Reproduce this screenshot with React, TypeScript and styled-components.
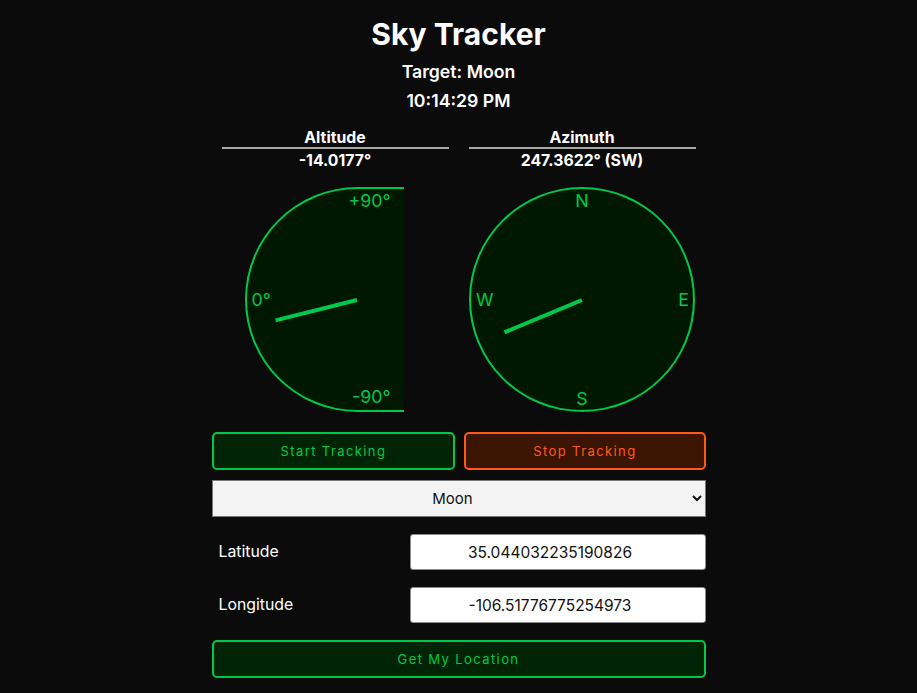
import React from "react";
import styled, { createGlobalStyle } from "styled-components";

const GREEN = "#00c84a";
const ORANGE = "#ff5a14";

const Global = createGlobalStyle`
  html, body { margin: 0; padding: 0; background: #0b0b0b; }
  body { font-family: Inter, "Noto Sans", sans-serif; color: #fff; }
  * { box-sizing: border-box; }
`;

const Page = styled.main`
  width: 494px;
  margin: 0 auto;
  display: flex;
  flex-direction: column;
  align-items: stretch;
`;

const Title = styled.h1`
  margin: 15px 0 0;
  font-size: 30px;
  line-height: 38px;
  font-weight: 700;
  text-align: center;
`;

const Sub = styled.div`
  font-size: 17.7px;
  line-height: 29px;
  font-weight: 600;
  text-align: center;
`;

const SubGroup = styled.div`
  margin-top: 4px;
`;

const Columns = styled.section`
  display: flex;
  gap: 20px;
  padding: 0 10px;
  margin-top: 13px;
`;

const Column = styled.div`
  flex: 1;
  display: flex;
  flex-direction: column;
  align-items: stretch;
`;

const ColHead = styled.div`
  font-size: 15.8px;
  line-height: 19px;
  font-weight: 700;
  text-align: center;
  border-bottom: 2px solid #a8a8a8;
`;

const ColValue = styled.div`
  margin-top: 2px;
  font-size: 15.8px;
  line-height: 20px;
  font-weight: 700;
  text-align: center;
`;

const DialRow = styled.div<{ $align: "start" | "center" }>`
  margin-top: 16px;
  display: flex;
  justify-content: ${(p) => (p.$align === "start" ? "flex-start" : "center")};
  padding-left: ${(p) => (p.$align === "start" ? "23px" : "0")};
`;

const HalfDial = styled.div`
  position: relative;
  width: 159px;
  height: 225px;
  border: 2px solid ${GREEN};
  border-right: none;
  border-radius: 112.5px 0 0 112.5px;
  background: #011800;
`;

const FullDial = styled.div`
  position: relative;
  width: 226px;
  height: 225px;
  border: 2px solid ${GREEN};
  border-radius: 50%;
  background: #011800;
`;

const DialLabel = styled.span<{
  $top?: string;
  $bottom?: string;
  $left?: string;
  $right?: string;
  $center?: "x" | "y";
}>`
  position: absolute;
  font-size: 17.8px;
  line-height: 20px;
  color: ${GREEN};
  ${(p) => (p.$top !== undefined ? `top: ${p.$top};` : "")}
  ${(p) => (p.$bottom !== undefined ? `bottom: ${p.$bottom};` : "")}
  ${(p) => (p.$left !== undefined ? `left: ${p.$left};` : "")}
  ${(p) => (p.$right !== undefined ? `right: ${p.$right};` : "")}
  ${(p) =>
    p.$center === "x"
      ? "transform: translateX(-50%);"
      : p.$center === "y"
      ? "transform: translateY(-50%);"
      : ""}
`;

const AltNeedle = styled.div`
  position: absolute;
  top: calc(50% - 2px);
  left: calc(110.5px - 84px);
  width: 84px;
  height: 4px;
  background: ${GREEN};
  transform-origin: right center;
`;

const AzNeedle = styled.div`
  position: absolute;
  left: calc(50% - 2px);
  top: calc(50% - 84px);
  width: 4px;
  height: 84px;
  background: ${GREEN};
  transform-origin: center bottom;
`;

const ButtonRow = styled.div`
  display: flex;
  gap: 9px;
  margin-top: 20px;
`;

const Button = styled.button<{ $variant: "go" | "stop" }>`
  flex: 1 1 auto;
  height: 38px;
  border-radius: 5px;
  border: 2px solid ${(p) => (p.$variant === "go" ? GREEN : ORANGE)};
  background: ${(p) => (p.$variant === "go" ? "#012406" : "#3c1402")};
  color: ${(p) => (p.$variant === "go" ? GREEN : ORANGE)};
  font-family: Inter, "Noto Sans", sans-serif;
  font-size: 13px;
  letter-spacing: 1.4px;
  cursor: pointer;
`;

const WideButton = styled(Button)`
  flex: none;
  width: 100%;
  margin-top: 17px;
`;

const Select = styled.select`
  margin-top: 10px;
  width: 100%;
  height: 37px;
  background: #f3f3f3;
  border: 1px solid #767676;
  border-radius: 0;
  color: #111;
  font-family: Inter, "Noto Sans", sans-serif;
  font-size: 15px;
  text-align: center;
  text-align-last: center;
`;

const FieldRow = styled.label`
  margin-top: 17px;
  display: flex;
  align-items: center;
  justify-content: space-between;
  padding-left: 7px;
`;

const FieldLabel = styled.span`
  font-size: 15.8px;
  color: #fff;
  margin-top: -2px;
`;

const Input = styled.input`
  width: 296px;
  height: 36px;
  background: #fff;
  border: 1px solid #8a8a8a;
  border-radius: 3px;
  color: #111;
  font-family: Inter, "Noto Sans", sans-serif;
  font-size: 15.5px;
  text-align: center;
`;

export default function App() {
  const altitude = -14.0177;
  const azimuth = 247.3622;
  return (
    <>
      <Global />
      <Page>
        <Title>Sky Tracker</Title>
        <SubGroup>
          <Sub>Target: Moon</Sub>
          <Sub>10:14:29 PM</Sub>
        </SubGroup>
        <Columns>
          <Column>
            <ColHead>Altitude</ColHead>
            <ColValue>{altitude.toFixed(4)}°</ColValue>
            <DialRow $align="start">
              <HalfDial>
                <DialLabel $top="2px" $right="13px">+90°</DialLabel>
                <DialLabel $top="50%" $left="5px" $center="y">0°</DialLabel>
                <DialLabel $bottom="3px" $right="13px">-90°</DialLabel>
                <AltNeedle style={{ transform: `rotate(${altitude}deg)` }} />
              </HalfDial>
            </DialRow>
          </Column>
          <Column>
            <ColHead>Azimuth</ColHead>
            <ColValue>{azimuth.toFixed(4)}° (SW)</ColValue>
            <DialRow $align="center">
              <FullDial>
                <DialLabel $top="2px" $left="50%" $center="x">N</DialLabel>
                <DialLabel $top="50%" $right="4px" $center="y">E</DialLabel>
                <DialLabel $bottom="1px" $left="50%" $center="x">S</DialLabel>
                <DialLabel $top="50%" $left="5px" $center="y">W</DialLabel>
                <AzNeedle style={{ transform: `rotate(${azimuth}deg)` }} />
              </FullDial>
            </DialRow>
          </Column>
        </Columns>
        <ButtonRow>
          <Button $variant="go">Start Tracking</Button>
          <Button $variant="stop">Stop Tracking</Button>
        </ButtonRow>
        <Select defaultValue="Moon">
          <option>Sun</option>
          <option>Moon</option>
          <option>Mars</option>
          <option>Jupiter</option>
        </Select>
        <FieldRow>
          <FieldLabel>Latitude</FieldLabel>
          <Input type="number" defaultValue="35.044032235190826" />
        </FieldRow>
        <FieldRow>
          <FieldLabel>Longitude</FieldLabel>
          <Input type="number" defaultValue="-106.51776775254973" />
        </FieldRow>
        <WideButton $variant="go">Get My Location</WideButton>
      </Page>
    </>
  );
}
